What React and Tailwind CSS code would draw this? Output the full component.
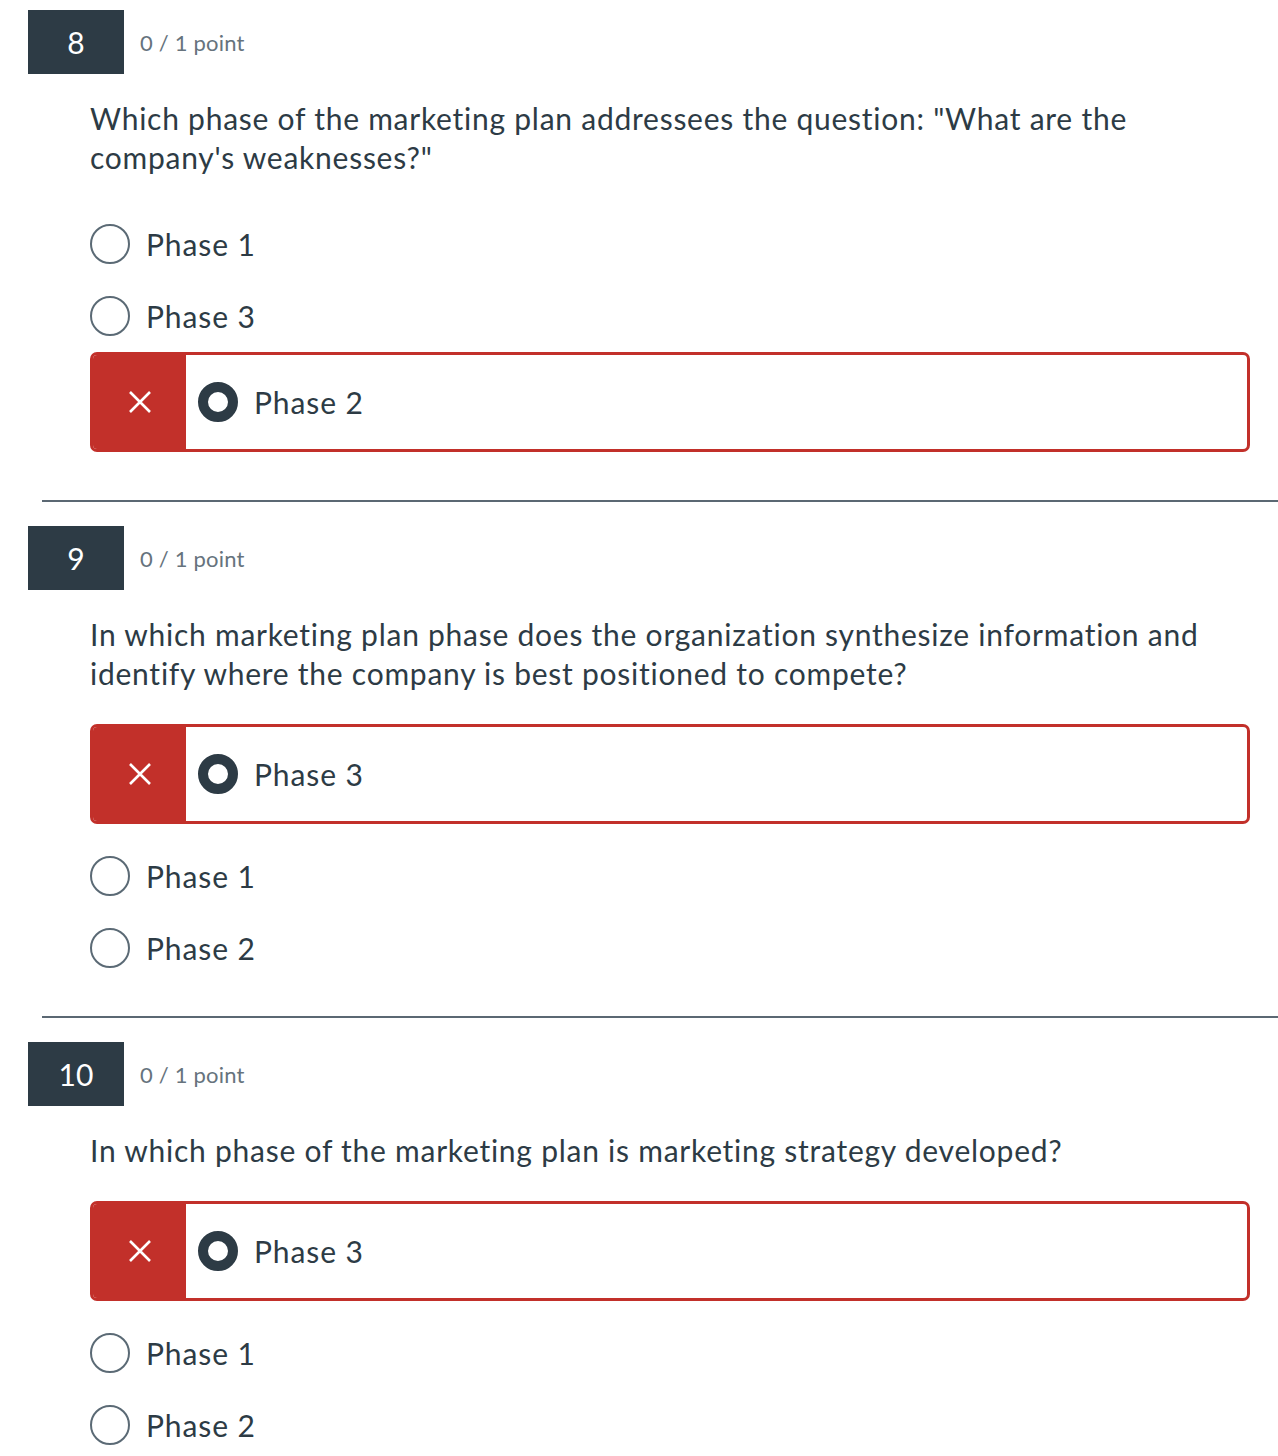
import React from "react";

const font = { fontFamily: "Lato, 'Open Sans', sans-serif" };

function XIcon() {
  return (
    <svg width="24" height="24" viewBox="0 0 24 24" fill="none">
      <path d="M2 2 L22 22 M22 2 L2 22" stroke="white" strokeWidth="2.6" strokeLinecap="butt" />
    </svg>
  );
}

function Plain({ label }) {
  return (
    <div className="flex items-center h-[72px]">
      <span className="w-[40px] h-[40px] rounded-full border-2 border-[#5b6a75] bg-white shrink-0" />
      <span className="ml-[16px] text-[30px] tracking-[0.9px] text-[#2d3b45]">{label}</span>
    </div>
  );
}

function Wrong({ label }) {
  return (
    <div className="flex h-[100px] mb-4 rounded-[7px] border-[3px] border-[#c2302a] overflow-hidden">
      <div className="w-[93px] bg-[#c2302a] flex items-center justify-center shrink-0">
        <XIcon />
      </div>
      <div className="flex items-center pl-[12px]">
        <span className="w-[40px] h-[40px] rounded-full border-[10px] border-[#2d3b45] bg-white shrink-0" />
        <span className="ml-[16px] text-[30px] tracking-[0.9px] text-[#2d3b45]">{label}</span>
      </div>
    </div>
  );
}

function Question({ num, text, items, last }) {
  return (
    <div className={last ? "" : "border-b-2 border-[#5b6873] pb-8 mb-[24px]"}>
      <div className="flex items-center -ml-[14px]">
        <div className="w-[96px] h-[64px] bg-[#2d3b45] text-white flex items-center justify-center text-[30px]">
          {num}
        </div>
        <div className="ml-4 text-[22px] tracking-[0.2px] text-[#66737d]">0 / 1 point</div>
      </div>
      <div className="pl-[48px] pr-[28px]">
        <p className="mt-[25px] mb-[31px] text-[30px] leading-[39px] text-[#2d3b45] tracking-[0.75px]">{text}</p>
        {items.map((it, i) =>
          it.wrong ? <Wrong key={i} label={it.label} /> : <Plain key={i} label={it.label} />
        )}
      </div>
    </div>
  );
}

export default function App() {
  return (
    <div className="bg-white min-h-[1456px] pt-[10px] pl-[42px]" style={font}>
      <Question
        num="8"
        text={'Which phase of the marketing plan addressees the question: "What are the company\'s weaknesses?"'}
        items={[{ label: "Phase 1" }, { label: "Phase 3" }, { label: "Phase 2", wrong: true }]}
      />
      <Question
        num="9"
        text="In which marketing plan phase does the organization synthesize information and identify where the company is best positioned to compete?"
        items={[{ label: "Phase 3", wrong: true }, { label: "Phase 1" }, { label: "Phase 2" }]}
      />
      <Question
        num="10"
        text="In which phase of the marketing plan is marketing strategy developed?"
        items={[{ label: "Phase 3", wrong: true }, { label: "Phase 1" }, { label: "Phase 2" }]}
        last
      />
    </div>
  );
}
